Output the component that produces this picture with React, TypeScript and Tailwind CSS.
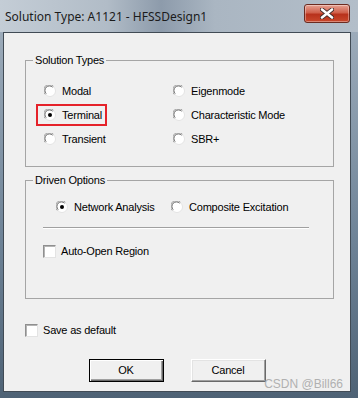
import React from 'react';

const uiFont = { fontFamily: '"Liberation Sans", Arial, sans-serif' };

// Classic sunken radio button
const RadioDot = ({ checked }: { checked?: boolean }) => (
    <svg width="12" height="12" viewBox="0 0 12 12" className="shrink-0">
        <circle cx="6" cy="6" r="5.5" fill="#fff" stroke="#e3e3e3" />
        <path d="M1.2 9.4 A5.4 5.4 0 0 1 9.4 1.2" fill="none" stroke="#a0a0a0" />
        <path d="M2.2 8.6 A4.3 4.3 0 0 1 8.6 2.2" fill="none" stroke="#696969" />
        {checked && <circle cx="6" cy="6" r="2" fill="#000" />}
    </svg>
);

const Radio = ({ label, checked }: { label: string; checked?: boolean }) => (
    <div className="flex items-center gap-[6px]">
        <RadioDot checked={checked} />
        <span className="leading-[13px]">{label}</span>
    </div>
);

const Check = ({ label }: { label: string }) => (
    <div className="flex h-[24px] items-center gap-[5px]">
        <div className="h-[13px] w-[13px] border border-t-[#8f8f8f] border-l-[#8f8f8f] border-b-[#e3e3e3] border-r-[#e3e3e3] bg-white shadow-[inset_1px_1px_0_#b4b4b4]" />
        <span className="leading-[13px]">{label}</span>
    </div>
);

const App = () => {
    return (
        <div className="flex h-[398px] w-[358px] flex-col overflow-hidden bg-[linear-gradient(to_bottom,#a3b1bf,#6e8397_60%,#4e6275)]">
            {/* Title bar */}
            <div className="flex h-[32px] shrink-0 justify-between bg-[linear-gradient(to_right,#c4cdd6,#b1bcc7_30%,#8d9bab_45%,#aab6c2_60%,#b3bec9)]">
                <div
                    className="pl-[5px] pt-[9px] text-[12px] leading-[16px] text-[#1b1b1b]"
                    style={{ fontFamily: '"Noto Sans", "Open Sans", sans-serif' }}
                >
                    Solution Type: A1121 - HFSSDesign1
                </div>
                <div className="mr-[8px] mt-[4px] flex h-[19px] w-[46px] items-center justify-center rounded-[3px] border border-[#6b2b20] bg-[linear-gradient(to_bottom,#e6a293,#d0604b_45%,#b8321c_55%,#c9482c)] shadow-[inset_0_0_0_1px_rgba(255,255,255,0.35)]">
                    <svg width="14" height="11" viewBox="0 0 14 11">
                        <path d="M2 1.5 L12 9.5 M12 1.5 L2 9.5" stroke="#3b2a2a" strokeWidth="4.2" strokeLinecap="round" />
                        <path d="M2 1.5 L12 9.5 M12 1.5 L2 9.5" stroke="#fff" strokeWidth="2.6" strokeLinecap="round" />
                    </svg>
                </div>
            </div>

            {/* Client area */}
            <div
                className="relative ml-[3px] flex h-[360px] w-[348px] flex-col border border-[#414b55] bg-[#f0f0f0] text-[11px] tracking-[-0.2px] text-black"
                style={uiFont}
            >
                <fieldset className="ml-[21px] mt-[21px] w-[309px] border border-[#a5a5a5] pb-[15px]">
                    <legend className="ml-[7px] px-[2px] leading-[13px]">Solution Types</legend>
                    <div className="mt-[12px] grid grid-cols-[129px_1fr] pl-[18px]">
                        <div className="flex flex-col">
                            <div className="flex h-[24px] items-center">
                                <Radio label="Modal" />
                            </div>
                            <div className="flex h-[24px] items-center">
                                <div className="-ml-[8px] flex h-[22px] w-[71px] items-center border-2 border-[#e5222a] pl-[6px]">
                                    <Radio label="Terminal" checked />
                                </div>
                            </div>
                            <div className="flex h-[24px] items-center">
                                <Radio label="Transient" />
                            </div>
                        </div>
                        <div className="flex flex-col">
                            <div className="flex h-[24px] items-center">
                                <Radio label="Eigenmode" />
                            </div>
                            <div className="flex h-[24px] items-center">
                                <Radio label="Characteristic Mode" />
                            </div>
                            <div className="flex h-[24px] items-center">
                                <Radio label="SBR+" />
                            </div>
                        </div>
                    </div>
                </fieldset>

                <fieldset className="ml-[21px] mt-[7px] w-[309px] border border-[#a5a5a5] pb-[35px]">
                    <legend className="ml-[7px] px-[2px] leading-[13px]">Driven Options</legend>
                    <div className="mt-[8px] flex h-[24px] items-center pl-[30px]">
                        <div className="w-[115px]">
                            <Radio label="Network Analysis" checked />
                        </div>
                        <Radio label="Composite Excitation" />
                    </div>
                    <div className="ml-[17px] mt-[8px] h-[2px] w-[266px] border-t border-b border-t-[#a0a0a0] border-b-white" />
                    <div className="ml-[17px] mt-[10px]">
                        <Check label="Auto-Open Region" />
                    </div>
                </fieldset>

                <div className="ml-[21px] mt-[19px]">
                    <Check label="Save as default" />
                </div>

                <div className="mt-[17px] flex justify-center gap-[27px]">
                    <button className="flex h-[23px] w-[75px] items-center justify-center border border-black bg-[#f0f0f0] shadow-[inset_1px_1px_0_#fff,inset_-1px_-1px_0_#696969,inset_-2px_-2px_0_#a0a0a0]">
                        OK
                    </button>
                    <button className="flex h-[23px] w-[75px] items-center justify-center border border-t-white border-l-white border-b-[#696969] border-r-[#696969] bg-[#f0f0f0] shadow-[inset_-1px_-1px_0_#a0a0a0,inset_1px_1px_0_#e3e3e3]">
                        Cancel
                    </button>
                </div>

                {/* watermark */}
                <span className="absolute bottom-0 right-[7px] text-[12px] leading-[14px] tracking-normal text-[#b0b0b0]">
                    CSDN @Bill66
                </span>
            </div>
        </div>
    );
};

export default App;
